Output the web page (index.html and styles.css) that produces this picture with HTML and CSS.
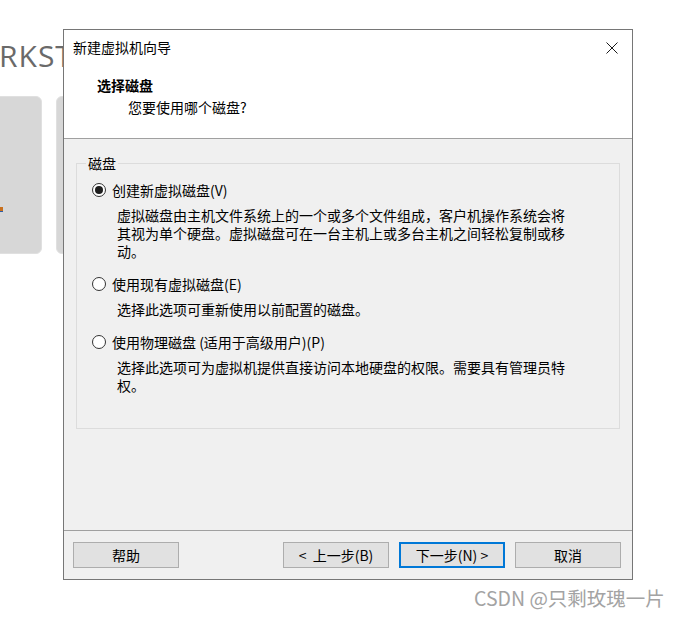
FILE: index.html
```html
<!DOCTYPE html>
<html lang="zh-CN">
<head>
    <meta charset="UTF-8">
    <title>新建虚拟机向导</title>
    <link rel="stylesheet" href="styles.css">
</head>
<body>
    <div class="desktop">
        <div class="brand">RKST</div>
        <div class="cards">
            <div class="card"><span class="mark"></span></div>
            <div class="card card-second"></div>
        </div>
    </div>

    <div class="dialog">
        <div class="header">
            <div class="titlebar">
                <span class="title">新建虚拟机向导</span>
                <svg class="close" width="12" height="12" viewBox="0 0 12 12">
                    <path d="M0.5 0.5 L11.5 11.5 M11.5 0.5 L0.5 11.5" stroke="#1a1a1a" stroke-width="1" fill="none"/>
                </svg>
            </div>
            <div class="step-title">选择磁盘</div>
            <div class="step-sub">您要使用哪个磁盘?</div>
        </div>

        <div class="body">
            <div class="group">
                <span class="legend">磁盘</span>

                <div class="option">
                    <span class="radio checked"></span>
                    <span class="option-label">创建新虚拟磁盘(V)</span>
                </div>
                <div class="desc">虚拟磁盘由主机文件系统上的一个或多个文件组成，客户机操作系统会将<br>其视为单个硬盘。虚拟磁盘可在一台主机上或多台主机之间轻松复制或移<br>动。</div>

                <div class="option">
                    <span class="radio"></span>
                    <span class="option-label">使用现有虚拟磁盘(E)</span>
                </div>
                <div class="desc">选择此选项可重新使用以前配置的磁盘。</div>

                <div class="option">
                    <span class="radio"></span>
                    <span class="option-label">使用物理磁盘 (适用于高级用户)(P)</span>
                </div>
                <div class="desc">选择此选项可为虚拟机提供直接访问本地硬盘的权限。需要具有管理员特<br>权。</div>
            </div>
        </div>

        <div class="footer">
            <button class="btn">帮助</button>
            <div class="spacer"></div>
            <button class="btn">&lt;&nbsp; 上一步(B)</button>
            <button class="btn default">下一步(N) &gt;</button>
            <button class="btn">取消</button>
        </div>
    </div>

    <div class="watermark">CSDN @只剩玫瑰一片</div>
</body>
</html>
```

FILE: styles.css
```css
body {
    margin: 0;
    width: 681px;
    height: 617px;
    background: #ffffff;
    position: relative;
    overflow: hidden;
    font-family: "Noto Sans CJK SC", "Noto Sans", sans-serif;
    color: #000;
}

.desktop {
    padding-top: 38px;
}

.brand {
    font-family: "Open Sans", "Noto Sans", sans-serif;
    font-size: 30px;
    line-height: 36px;
    color: #6a6a6a;
    letter-spacing: 1px;
    margin-left: -1px;
}

.cards {
    display: flex;
    gap: 14px;
    margin-top: 22px;
    margin-left: -10px;
}

.card {
    width: 50px;
    height: 156px;
    background: #d7d7d7;
    border: 1px solid #e0e0e0;
    border-radius: 6px;
    position: relative;
}

.card-second {
    width: 120px;
}

.mark {
    position: absolute;
    left: 9px;
    top: 110px;
    width: 3px;
    height: 4px;
    background: #c8701e;
    border-bottom: 1px solid #2d5da8;
}

.dialog {
    position: absolute;
    left: 63px;
    top: 29px;
    width: 568px;
    height: 549px;
    border: 1px solid #767676;
    background: #f0f0f0;
    display: flex;
    flex-direction: column;
    font-size: 14px;
}

.header {
    height: 108px;
    background: #ffffff;
    border-bottom: 1px solid #a0a0a0;
}

.titlebar {
    height: 35px;
    display: flex;
    align-items: center;
    justify-content: space-between;
    padding: 0 14px 0 9px;
}

.title {
    line-height: 35px;
}

.close {
    margin-top: 1px;
}

.step-title {
    font-weight: bold;
    line-height: 18px;
    margin-top: 11px;
    padding-left: 33px;
}

.step-sub {
    line-height: 18px;
    margin-top: 4px;
    padding-left: 64px;
}

.body {
    height: 392px;
    padding: 24px 12px 0 12px;
    box-sizing: border-box;
    border-bottom: 1px solid #a0a0a0;
}

.group {
    position: relative;
    height: 266px;
    box-sizing: border-box;
    border: 1px solid #dcdcdc;
    padding: 17px 16px 0 15px;
}

.legend {
    position: absolute;
    left: 9px;
    top: -10px;
    padding: 0 2px;
    line-height: 18px;
    background: #f0f0f0;
}

.option {
    display: flex;
    align-items: center;
    height: 18px;
    margin-top: 15px;
}

.option:first-of-type {
    margin-top: 0;
}

.radio {
    width: 12px;
    height: 12px;
    border: 1px solid #333;
    border-radius: 50%;
    background: #fff;
    position: relative;
    margin-right: 6px;
    flex-shrink: 0;
}

.radio.checked::after {
    content: "";
    position: absolute;
    left: 2px;
    top: 2px;
    width: 8px;
    height: 8px;
    border-radius: 50%;
    background: #1e1e1e;
}

.option-label {
    line-height: 18px;
}

.desc {
    line-height: 18px;
    margin-top: 7px;
    padding-left: 25px;
    white-space: nowrap;
}

.footer {
    flex: 1;
    display: flex;
    align-items: flex-start;
    gap: 10px;
    padding: 11px 11px 0 9px;
}

.spacer {
    flex: 1;
}

.btn {
    width: 106px;
    height: 26px;
    background: #e1e1e1;
    border: 1px solid #adadad;
    font-family: "Noto Sans CJK SC", "Noto Sans", sans-serif;
    font-size: 14px;
    color: #000;
    padding: 0;
    margin: 0;
}

.btn.default {
    border: 2px solid #0078d7;
}

.watermark {
    position: absolute;
    left: 474px;
    top: 585px;
    font-size: 19.5px;
    line-height: 26px;
    color: #a3a3a3;
    white-space: nowrap;
}
```
